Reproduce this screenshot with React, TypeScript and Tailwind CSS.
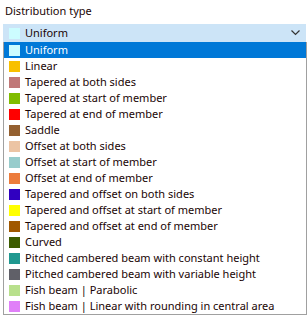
import React from "react";

type Item = { label: string; color: string };

const items: Item[] = [
  { label: "Uniform", color: "#ccfcff" },
  { label: "Linear", color: "#f8c000" },
  { label: "Tapered at both sides", color: "#c07878" },
  { label: "Tapered at start of member", color: "#80bc00" },
  { label: "Tapered at end of member", color: "#ff0000" },
  { label: "Saddle", color: "#946030" },
  { label: "Offset at both sides", color: "#ecc4a4" },
  { label: "Offset at start of member", color: "#98cccc" },
  { label: "Offset at end of member", color: "#ec7c3c" },
  { label: "Tapered and offset on both sides", color: "#3000c0" },
  { label: "Tapered and offset at start of member", color: "#ffff00" },
  { label: "Tapered and offset at end of member", color: "#a05800" },
  { label: "Curved", color: "#3c5c00" },
  { label: "Pitched cambered beam with constant height", color: "#209890" },
  { label: "Pitched cambered beam with variable height", color: "#606068" },
  { label: "Fish beam | Parabolic", color: "#b8e08c" },
  { label: "Fish beam | Linear with rounding in central area", color: "#e080f8" },
];

const Swatch = ({ color }: { color: string }) => (
  <span className="w-[11px] h-[11px] shrink-0" style={{ backgroundColor: color }} />
);

export default function App() {
  return (
    <div className="w-[308px] h-[316px] bg-white font-['Noto_Sans',sans-serif] text-[11px] text-[#1a0505] overflow-hidden">
      <div className="h-[24px] pl-[5px] pt-[3px] leading-[16px]">Distribution type</div>
      <div className="ml-[3px] w-[303px] h-[18px] bg-[#cce4f7] flex items-center pl-[6px] pr-[6px]">
        <Swatch color={items[0].color} />
        <span className="ml-[5px] leading-[16px]">Uniform</span>
        <svg className="ml-auto" width="9" height="6" viewBox="0 0 9 6">
          <path d="M0.5 0.5 L4.5 4.5 L8.5 0.5" stroke="#333" strokeWidth="1.2" fill="none" />
        </svg>
      </div>
      <div className="ml-[3px] w-[304px] border border-t-0 border-[#a0a0a0]">
        {items.map((it, i) => (
          <div
            key={i}
            className={
              "h-[16px] flex items-center pl-[5px] " +
              (i === 0 ? "bg-[#0078d7] text-white" : "")
            }
          >
            <Swatch color={it.color} />
            <span className="ml-[5px] leading-[16px] whitespace-nowrap">{it.label}</span>
          </div>
        ))}
      </div>
    </div>
  );
}
